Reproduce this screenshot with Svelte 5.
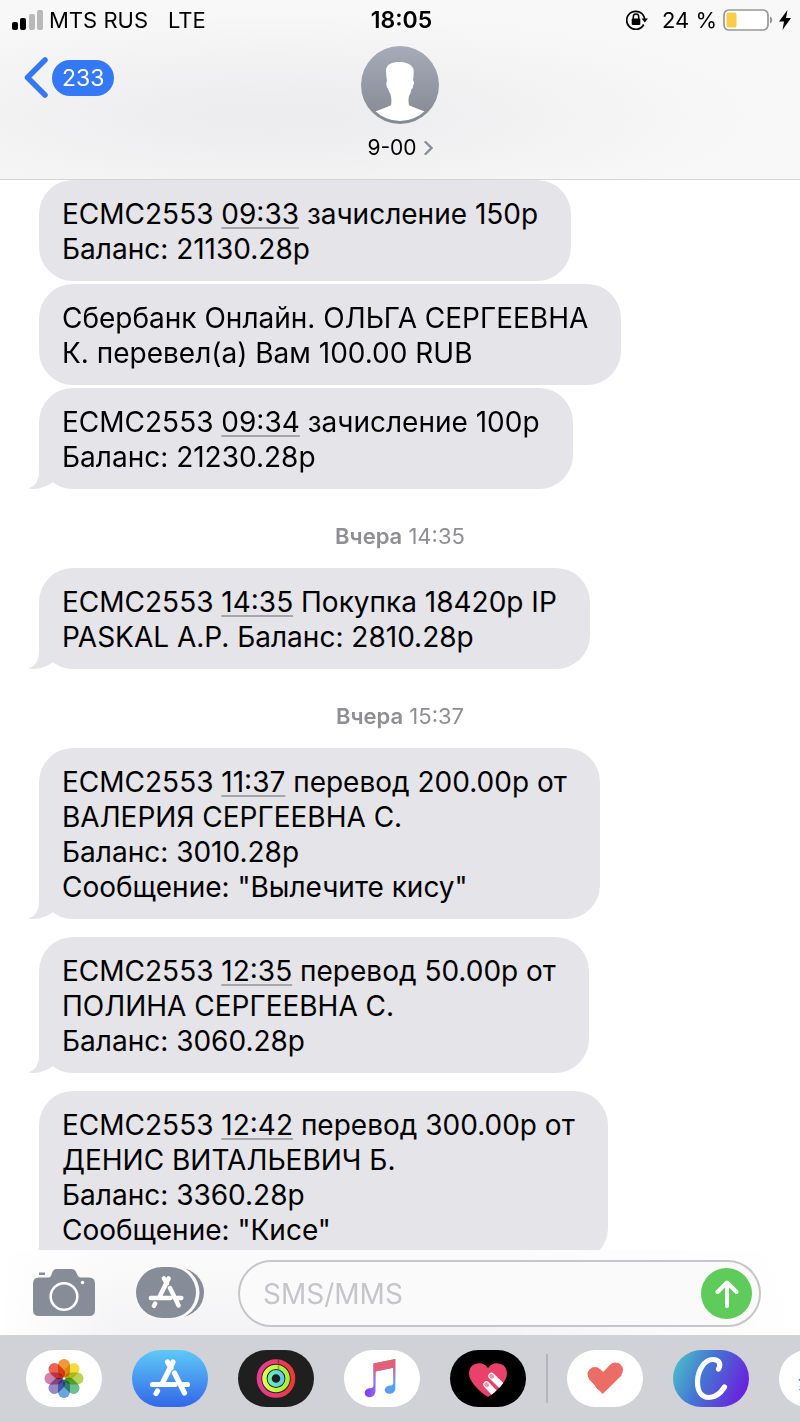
<script>
  const thread = [
    { lines: [['ECMC2553 ', '09:33', ' зачисление 150р'], ['Баланс: 21130.28р']] },
    { lines: [['Сбербанк Онлайн. ОЛЬГА СЕРГЕЕВНА'], ['К. перевел(а) Вам 100.00 RUB']] },
    { lines: [['ECMC2553 ', '09:34', ' зачисление 100р'], ['Баланс: 21230.28р']], tail: true },
    { day: 'Вчера', time: '14:35' },
    { lines: [['ECMC2553 ', '14:35', ' Покупка 18420р IP'], ['PASKAL A.P. Баланс: 2810.28р']], tail: true },
    { day: 'Вчера', time: '15:37' },
    {
      lines: [['ECMC2553 ', '11:37', ' перевод 200.00р от'], ['ВАЛЕРИЯ СЕРГЕЕВНА С.'], ['Баланс: 3010.28р'], ['Сообщение: "Вылечите кису"']],
      tail: true
    },
    {
      lines: [['ECMC2553 ', '12:35', ' перевод 50.00р от'], ['ПОЛИНА СЕРГЕЕВНА С.'], ['Баланс: 3060.28р']],
      tail: true
    },
    {
      lines: [['ECMC2553 ', '12:42', ' перевод 300.00р от'], ['ДЕНИС ВИТАЛЬЕВИЧ Б.'], ['Баланс: 3360.28р'], ['Сообщение: "Кисе"']],
      tail: true
    }
  ];

  const petals = ['#f09a37', '#f0dc3c', '#b9d455', '#6cbf8b', '#6ba5dc', '#9a86c4', '#cf82ae', '#ea6357'];
  let draft = $state('');
</script>

{#snippet storeMark()}
  <g fill="none" stroke="#fff" stroke-width="5.2" stroke-linecap="round">
    <path d="M41 12 30.500 33M35.500 12 39 18M20.500 34.500H43M51 34.500H55.500M25.500 41 24 43.500M42.500 23 52.500 43" />
  </g>
{/snippet}

<div class="phone">
  <header>
    <div class="status">
      <div class="side">
        <svg class="signal" width="32" height="20" viewBox="0 0 32 20" aria-hidden="true">
          <rect x="0" y="12" width="6" height="8" rx="2" />
          <rect x="8" y="8" width="6" height="12" rx="2" />
          <rect x="17" y="4" width="6" height="16" rx="2" fill="#b9b9ba" />
          <rect x="25" y="0" width="6" height="20" rx="2" fill="#b9b9ba" />
        </svg>
        <span>MTS RUS</span>
        <span class="net">LTE</span>
      </div>
      <strong>18:05</strong>
      <div class="side end">
        <svg class="lock" width="22" height="20" viewBox="0 0 22 20" aria-hidden="true">
          <path d="M17.700 14.500A9 9 0 1 1 18.600 9" fill="none" stroke="#000" stroke-width="1.700" />
          <path d="M15.500 8.600H22L18.800 12.600Z" />
          <rect x="5.700" y="8.600" width="8.600" height="6.300" rx="1" />
          <path d="M7.300 9V6.800a2.700 2.700 0 0 1 5.400 0V9" fill="none" stroke="#000" stroke-width="1.500" />
        </svg>
        <span>24 %</span>
        <svg class="battery" width="50" height="22" viewBox="0 0 50 22" aria-hidden="true">
          <rect x="1" y="1" width="44" height="20" rx="5" fill="#fff" stroke="#97979a" stroke-width="1.700" />
          <rect x="3.500" y="3.500" width="10" height="15" rx="1.500" fill="#f7ce46" />
          <path d="M47 7.500c3 1 3 6 0 7z" fill="#97979a" />
        </svg>
        <svg class="bolt" width="12" height="20" viewBox="0 0 12 20" aria-hidden="true"><path d="M8.500 0 0 11.500H5L3.500 20 12 8H7Z" /></svg>
      </div>
    </div>
    <div class="nav">
      <button class="back" aria-label="Назад, 233">
        <svg width="24" height="41" viewBox="0 0 24 41" aria-hidden="true"><path d="M21 3 3.500 20.500 21 38" fill="none" stroke="#3478f6" stroke-width="5.500" stroke-linecap="round" stroke-linejoin="round" /></svg>
        <span>233</span>
      </button>
      <button class="contact">
        <svg width="78" height="78" viewBox="0 0 78 78" aria-hidden="true">
          <defs>
            <linearGradient id="face" x2="0" y2="1"><stop stop-color="#a6abb9" /><stop offset="1" stop-color="#838892" /></linearGradient>
            <clipPath id="disc"><circle cx="39" cy="39" r="36" /></clipPath>
          </defs>
          <circle cx="39" cy="39" r="39" fill="url(#face)" />
          <path clip-path="url(#disc)" fill="#fff" d="M39 16C31 16 25 18 25 25Q25 29 26 35Q24.500 37 26 41L27 43Q28 46 29.500 48Q31 54 30 59Q27 61 10 67L14 78H64L68 67Q51 61 48 59Q47 54 48 50Q50 47 50.500 43Q52 43 52 40Q54 36 52 34Q53 29 52.500 23Q50 18 45 17Q43 16 39 16Z" />
        </svg>
        <span class="name">9-00
          <svg width="9" height="14" viewBox="0 0 9 14" aria-hidden="true"><path d="M1.500 1 7.500 7 1.500 13" fill="none" stroke="#8a8f99" stroke-width="2.400" stroke-linecap="round" /></svg>
        </span>
      </button>
    </div>
  </header>

  <main>
    {#each thread as item}
      {#if item.day}
        <p class="day"><b>{item.day}</b> {item.time}</p>
      {:else}
        <div class="bubble" class:last={item.tail}>
          {#each item.lines as [text, link, rest]}
            <div class="line">{text}{#if link}<a href="#{link}">{link}</a>{rest}{/if}</div>
          {/each}
          {#if item.tail}
            <svg class="tail" width="26" height="34" viewBox="0 0 26 34" aria-hidden="true"><path d="M11 0V16C11 25 8 31 0 33.500C10 35 18 32 24.500 27.500L25 0Z" fill="#e5e4e9" /></svg>
          {/if}
        </div>
      {/if}
    {/each}
  </main>

  <form class="composer" onsubmit={(e) => e.preventDefault()}>
    <button type="button" class="camera" aria-label="Камера">
      <svg width="62" height="48" viewBox="0 0 62 48" aria-hidden="true">
        <path fill="#868c98" d="M6 8.500H16Q18 8 19 4Q20.500 0 23 0H39Q42 0 43.500 4Q45 8 47 8.500H56Q62 8.500 62 14.500V41Q62 47 56 47H6Q0 47 0 41V14.500Q0 8.500 6 8.500ZM6 3.500H12V6H6Z" />
        <circle cx="31" cy="27.500" r="13.300" fill="none" stroke="#fff" stroke-width="2.600" />
        <circle cx="49.500" cy="13.500" r="1.800" fill="#fff" />
      </svg>
    </button>
    <button type="button" class="apps" aria-label="Приложения">
      <svg width="68" height="51" viewBox="0 0 68 51" aria-hidden="true">
        <rect x="14" y="1" width="54" height="49" rx="25" fill="#868c98" />
        <rect x="-1.500" y="-1.500" width="65" height="54" rx="27" fill="#f9f9fa" />
        <rect width="60" height="51" rx="26" fill="#868c98" />
        <g transform="translate(-3 1) scale(.87)">{@render storeMark()}</g>
      </svg>
    </button>
    <div class="field">
      <input type="text" placeholder="SMS/MMS" aria-label="SMS/MMS" bind:value={draft} />
      <button class="send" aria-label="Отправить">
        <svg width="24" height="28" viewBox="0 0 24 28" aria-hidden="true"><path d="M12 26V3M2.500 12 12 2.500 21.500 12" fill="none" stroke="#fff" stroke-width="4" stroke-linecap="round" stroke-linejoin="round" /></svg>
      </button>
    </div>
  </form>

  <nav class="dock" aria-label="Приложения iMessage">
    <button aria-label="Фото">
      <svg viewBox="0 0 76 57" aria-hidden="true">
        {#each petals as color, i}
          <rect class="petal" x="32" y="9" width="12" height="18.500" rx="6" fill={color} transform="rotate({i * 45} 38 28.500)" />
        {/each}
      </svg>
    </button>
    <button class="store" aria-label="App Store"><svg viewBox="0 0 76 57" aria-hidden="true">{@render storeMark()}</svg></button>
    <button class="activity" aria-label="Активность">
      <svg viewBox="0 0 76 57" aria-hidden="true">
        <defs>
          <linearGradient id="move"><stop stop-color="#e83a94" /><stop offset=".5" stop-color="#ea3c70" /><stop offset="1" stop-color="#ea3a30" /></linearGradient>
          <linearGradient id="train"><stop stop-color="#dcfb50" /><stop offset="1" stop-color="#a4f03c" /></linearGradient>
          <linearGradient id="stand"><stop stop-color="#6ff0a8" /><stop offset="1" stop-color="#5ccbf2" /></linearGradient>
        </defs>
        <g fill="none">
          <circle cx="38" cy="28.500" r="17" stroke="url(#move)" stroke-width="4.600" />
          <circle cx="38" cy="28.500" r="11.600" stroke="url(#train)" stroke-width="4.400" />
          <circle cx="38" cy="28.500" r="6.400" stroke="url(#stand)" stroke-width="4.200" />
          <path d="M40.500 9.500V13.500M40.500 15.500V19.500" stroke="#000" stroke-opacity=".3" stroke-width="1.500" />
        </g>
      </svg>
    </button>
    <button aria-label="Музыка">
      <svg viewBox="0 0 76 57" aria-hidden="true">
        <defs>
          <linearGradient id="noteFade" x2="0" y2="1"><stop stop-color="#e8606c" /><stop offset=".3" stop-color="#e0607e" /><stop offset=".75" stop-color="#5ba4f5" stop-opacity="0" /></linearGradient>
          <linearGradient id="noteBase"><stop stop-color="#7a3cf5" /><stop offset=".35" stop-color="#9068f5" /><stop offset=".8" stop-color="#55a0f6" /></linearGradient>
        </defs>
        {#each ['url(#noteBase)', 'url(#noteFade)'] as paint}
          <path fill={paint} d="M29.500 13.500 51.300 9V38.500C51.300 42 48.500 44 45.200 43.700 40 43.500 39.500 38.500 43 36.500 45.500 35 49.300 36.500 49.300 32.500V17.800L31.500 21.500V40.500C31.500 45 28.500 47.500 25 47.200 20 46.800 19.500 41 23 39 26 37.500 29.500 39 29.500 35Z" />
        {/each}
      </svg>
    </button>
    <button class="touch" aria-label="Digital Touch">
      <svg viewBox="0 0 76 57" aria-hidden="true">
        <defs><clipPath id="heart"><path d="M38 47C30 42 19 32 19 23.500C19 12 33 10 38 18C43 10 57 12 57 23.500C57 32 46 42 38 47Z" /></clipPath></defs>
        <g clip-path="url(#heart)">
          <rect width="76" height="57" fill="#e9416a" />
          <path d="M36.500 34.500 51 50M41.500 26 58 42" stroke="#fff" stroke-width="6.500" stroke-linecap="round" />
          <path d="M36.300 34.300l.8.800M41.300 25.800l.8.800" stroke="#f590a8" stroke-width="4" stroke-linecap="round" />
        </g>
      </svg>
    </button>
    <span class="rule"></span>
    <button aria-label="Здоровье">
      <svg viewBox="0 0 76 57" aria-hidden="true"><path d="M28 24.500 35.500 32M48.500 20 35.500 33.500" fill="none" stroke="#ec6c66" stroke-width="15" stroke-linecap="round" /><path d="M22 29 35.500 44 55 25 40 22Z" fill="#ec6c66" /></svg>
    </button>
    <button class="canva" aria-label="Canva">
      <svg viewBox="0 0 76 57" aria-hidden="true"><path d="M45.500 19C48.500 14 46 9.500 40 9.500C31 9.500 24.500 21 24.500 32C24.500 42 29 47.500 36 47.500C43 47.500 48 42.500 51.500 37" fill="none" stroke="#fff" stroke-width="5.200" stroke-linecap="round" /></svg>
    </button>
    <button aria-label="Ещё">
      <svg viewBox="0 0 76 57" aria-hidden="true"><path d="M19 30 25 26V32ZM20 39H26V45Q22 43 20 39Z" fill="#3f7be0" /></svg>
    </button>
  </nav>
</div>

<style>
  :global(body) { margin: 0; }
  .phone {
    display: flex;
    flex-direction: column;
    height: 100vh;
    overflow: hidden;
    background: #fff;
    color: #000;
    font-family: Inter, "Liberation Sans", sans-serif;
  }
  button {
    padding: 0;
    border: 0;
    background: none;
    font: inherit;
    color: inherit;
  }
  svg { display: block; flex: none; }

  header {
    flex: none;
    border-bottom: 1px solid #d4d4d6;
    background: radial-gradient(ellipse at 34% 65%, #ededef 10%, #f3f3f4 40%, #f8f8f8 65%);
  }
  .status {
    display: grid;
    grid-template-columns: 1fr auto 1fr;
    align-items: center;
    height: 40px;
    padding: 0 9px 0 12px;
    font-size: 22px;
    line-height: 26px;
  }
  .status strong { font-size: 23px; font-weight: 600; }
  .side { display: flex; align-items: center; }
  .end { justify-content: flex-end; }
  .signal { margin-right: 5px; }
  .net { margin-left: 20px; }
  .lock { margin-right: 14px; }
  .battery { margin: 0 6px; }

  .nav {
    display: grid;
    grid-template-columns: 1fr auto 1fr;
    align-items: start;
    height: 133px;
    padding: 6px 24px 0;
  }
  .back {
    display: flex;
    align-items: center;
    gap: 4px;
    justify-self: start;
    margin-top: 11px;
  }
  .back span {
    padding: 0 10px;
    border-radius: 18px;
    background: #3478f6;
    color: #fff;
    font-size: 23px;
    line-height: 36px;
  }
  .contact {
    display: flex;
    flex-direction: column;
    align-items: center;
    gap: 11px;
  }
  .name {
    display: flex;
    align-items: center;
    gap: 7px;
    font-size: 21px;
    line-height: 26px;
  }

  main {
    display: flex;
    flex: 1;
    flex-direction: column;
    align-items: flex-start;
    gap: 3px;
    min-height: 0;
    overflow: hidden;
    padding: 0 39px;
  }
  .bubble {
    position: relative;
    flex: none;
    padding: 17px 33px 14px 23px;
    border-radius: 34px;
    background: #e5e4e9;
    font-size: 28px;
    line-height: 35px;
  }
  .line { white-space: pre-wrap; }
  .last { margin-bottom: 15px; }
  .bubble a {
    color: inherit;
    text-decoration: underline;
    text-decoration-color: #a5a5aa;
    text-decoration-thickness: 2px;
    text-underline-offset: 3px;
    text-decoration-skip-ink: none;
  }
  .tail { position: absolute; left: -11px; bottom: 0; }
  .day {
    align-self: stretch;
    margin: 16px 0 15px;
    color: #8e8e93;
    font-size: 22px;
    line-height: 27px;
    text-align: center;
  }
  .day b { font-weight: 600; }

  .composer {
    display: flex;
    flex: none;
    align-items: center;
    height: 85px;
    padding: 0 39px 0 33px;
    background: linear-gradient(90deg, #fff, #ffffff00 15%, #ffffff00 60%, #fff), linear-gradient(#fbfbfb, #f3f3f5);
  }
  .apps { margin: 0 34px 0 41px; }
  .field {
    display: flex;
    flex: 1;
    align-items: center;
    box-sizing: border-box;
    min-width: 0;
    height: 67px;
    margin-top: 2px;
    padding: 0 7px 0 23px;
    border: 2px solid #c6c6ca;
    border-radius: 34px;
    background: #fafafa;
  }
  input {
    flex: 1;
    min-width: 0;
    padding: 0;
    border: 0;
    outline: 0;
    background: none;
    font: 28px/34px Inter, "Liberation Sans", sans-serif;
  }
  input::placeholder { color: #c5c5ca; opacity: 1; }
  .send {
    display: grid;
    place-items: center;
    width: 51px;
    height: 51px;
    border-radius: 50%;
    background: #5fcb5b;
  }

  .dock {
    display: flex;
    flex: none;
    gap: 30px;
    box-sizing: border-box;
    height: 87px;
    padding: 15px 0 0 26px;
    overflow: hidden;
    background: #d0d2d8;
  }
  .dock button {
    flex: none;
    width: 76px;
    height: 57px;
    border-radius: 30px;
    background: #fff;
    overflow: hidden;
  }
  .dock .store { background: linear-gradient(#5fc9f7, #3267e8); }
  .dock .activity { background: #1f1f1f; }
  .dock .touch { background: #000; }
  .dock .canva { background: linear-gradient(115deg, #4cc0c8 5%, #4379d2 40%, #6a22dc 88%); }
  .petal { mix-blend-mode: multiply; }
  .rule {
    flex: none;
    width: 2px;
    height: 49px;
    margin: 4px -11px 0 -10px;
    background: #b4b5ba;
  }
</style>
